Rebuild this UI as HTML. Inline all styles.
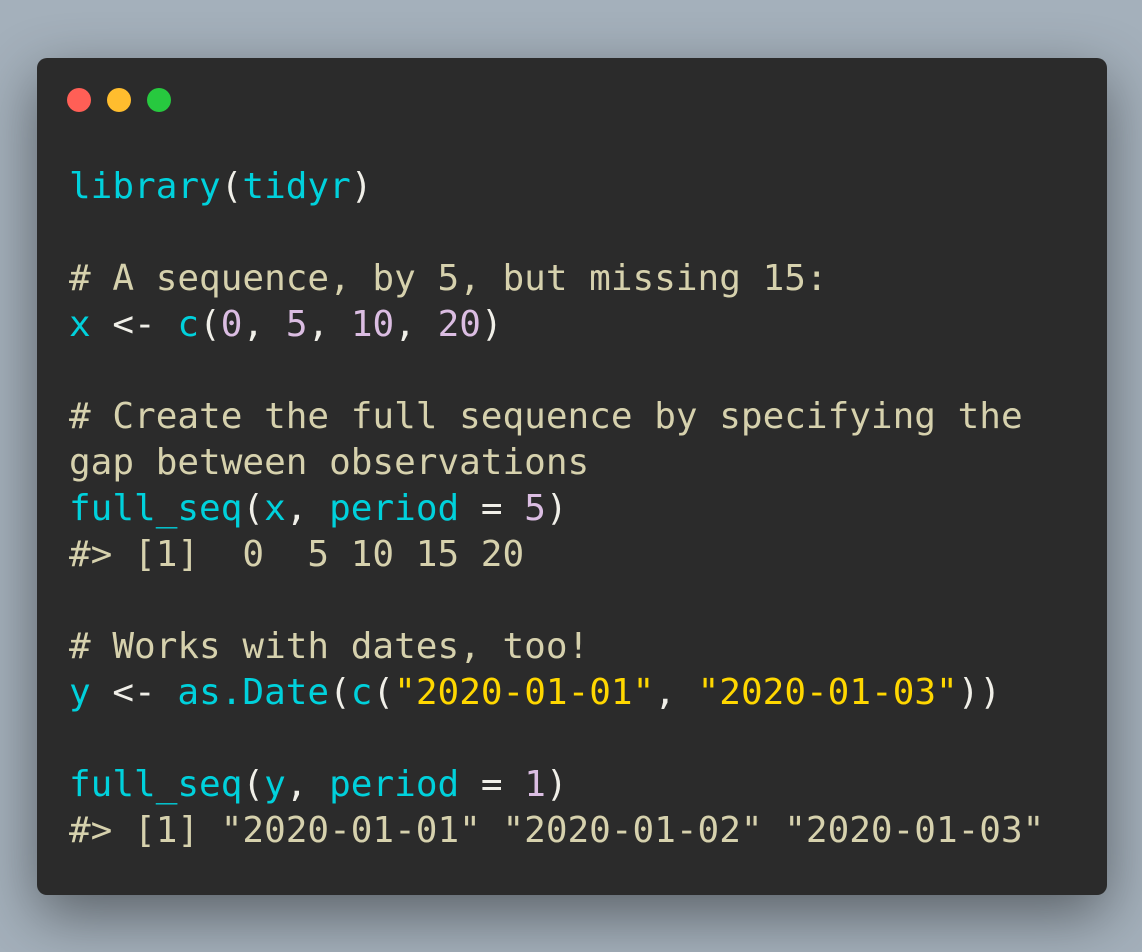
<!DOCTYPE html>
<html><head><meta charset="utf-8"><style>
html,body{margin:0;padding:0}
body{width:1142px;height:952px;background:#a4b0bb;position:relative;overflow:hidden}
.win{position:absolute;left:37px;top:58px;width:1070px;height:837px;background:#2b2b2b;border-radius:10px;box-shadow:0 20px 60px rgba(0,0,0,.45)}
.dot{position:absolute;top:88px;width:24px;height:24px;border-radius:50%}
pre{position:absolute;left:69px;top:164px;margin:0;font-family:"DejaVu Sans Mono","Liberation Mono",monospace;font-size:36px;line-height:46px;color:#f0efe8;white-space:pre}
.k{color:#00d1dc}.c{color:#d6d1ad}.n{color:#dbbde2}.s{color:#ffd700}
</style></head><body>
<div class="win"></div>
<div class="dot" style="left:67px;background:#ff5f56"></div>
<div class="dot" style="left:107px;background:#ffbd2e"></div>
<div class="dot" style="left:147px;background:#27c93f"></div>
<pre><span class="k">library</span>(<span class="k">tidyr</span>)

<span class="c"># A sequence, by 5, but missing 15:</span>
<span class="k">x</span> &lt;- <span class="k">c</span>(<span class="n">0</span>, <span class="n">5</span>, <span class="n">10</span>, <span class="n">20</span>)

<span class="c"># Create the full sequence by specifying the</span>
<span class="c">gap between observations</span>
<span class="k">full_seq</span>(<span class="k">x</span>, <span class="k">period</span> = <span class="n">5</span>)
<span class="c">#&gt; [1]  0  5 10 15 20</span>

<span class="c"># Works with dates, too!</span>
<span class="k">y</span> &lt;- <span class="k">as.Date</span>(<span class="k">c</span>(<span class="s">"2020-01-01"</span>, <span class="s">"2020-01-03"</span>))

<span class="k">full_seq</span>(<span class="k">y</span>, <span class="k">period</span> = <span class="n">1</span>)
<span class="c">#&gt; [1] "2020-01-01" "2020-01-02" "2020-01-03"</span></pre>
</body></html>
